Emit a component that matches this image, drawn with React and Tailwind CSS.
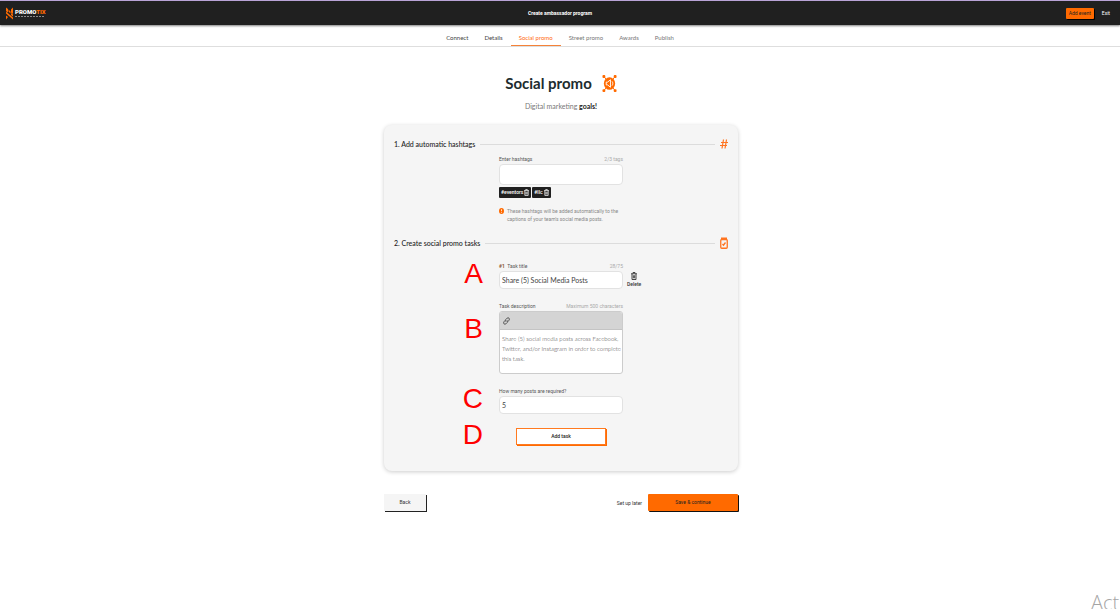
import { useState } from 'react'

const tabs = [
  { label: 'Connect', state: 'done' },
  { label: 'Details', state: 'done' },
  { label: 'Social promo', state: 'active' },
  { label: 'Street promo', state: 'todo' },
  { label: 'Awards', state: 'todo' },
  { label: 'Publish', state: 'todo' },
]

const tabStyles = {
  done: 'text-[#444444] border-transparent',
  active: 'text-[#ff6a13] border-[#f58238]',
  todo: 'text-[#777777] border-transparent',
}

function Logo() {
  return (
    <a href="#home" className="flex items-center gap-0.5" aria-label="Promotix">
      <svg viewBox="0 0 14 26" className="w-[7px] h-[13px]" fill="#ff6a00">
        <path d="M0 1l4 3v7l-4-3zM0 9l14 12v4L0 13zM0 17l4 3-4 5zM14 1l-4 4v6l4 3zM5 5l4 4v4L5 9zM14 15l-4-3v4l4 3z" />
      </svg>
      <span className="flex flex-col gap-px">
        <span className="text-[6px] leading-[6px] font-black text-white font-[Roboto,sans-serif]">
          PROMO<span className="text-[#ff6a00]">TIX</span>
        </span>
        <svg viewBox="0 0 30 1" className="w-[30px] h-px">
          <path d="M0 .5h30" stroke="#8a8a8a" strokeDasharray="2 1" />
        </svg>
      </span>
    </a>
  )
}

function MegaphoneIcon() {
  return (
    <svg viewBox="0 0 32 38" className="w-[15px] h-[19px]" fill="#ff6a00">
      <path d="M4 4l24 30M28 4L4 34" stroke="#ff6a00" strokeWidth="2" />
      <rect x="1" y="1" width="6" height="6" rx="2" />
      <rect x="25" y="1" width="6" height="6" rx="2" />
      <rect x="1" y="31" width="6" height="6" rx="2" />
      <rect x="25" y="31" width="6" height="6" rx="2" />
      <ellipse cx="16" cy="19" rx="12" ry="13.5" />
      <path d="M9 16h3l6-5v16l-6-5H9z" fill="none" stroke="#fff" strokeWidth="2" />
      <path d="M21.5 14.5c2 2.500 2 6.500 0 9" fill="none" stroke="#fff" strokeWidth="2" />
    </svg>
  )
}

function HashIcon() {
  return (
    <svg viewBox="0 0 16 20" className="w-2 h-2.5" fill="none" stroke="#ff7420" strokeWidth="2.4">
      <path d="M7 1L4 19M13 1l-3 18M2 7h14M0 13h14" />
    </svg>
  )
}

function ClipboardIcon() {
  return (
    <svg viewBox="0 0 16 24" className="w-2 h-3" fill="none" stroke="#ff7420" strokeWidth="2.6">
      <rect x="1.500" y="5" width="13" height="17.500" rx="2" />
      <path d="M2 3h12" strokeWidth="4" />
      <path d="M5 14l2 2.500L11 11" />
    </svg>
  )
}

function TrashIcon({ className }) {
  return (
    <svg viewBox="0 0 12 16" className={className} fill="none" stroke="currentColor" strokeWidth="1.800">
      <path d="M0 3.500h12M4 3V1h4v2M2 4v11h8V4M4.700 6.500v6M7.300 6.500v6" />
    </svg>
  )
}

function LinkIcon() {
  return (
    <svg viewBox="0 0 24 28" className="w-[7px] h-2" fill="none" stroke="#444444" strokeWidth="3" strokeLinecap="round">
      <path d="M10 16c-3-3-2-6 0-8l4-4c5-4 11 2 7 7l-3 4" />
      <path d="M14 12c3 3 2 6 0 8l-4 4c-5 4-11-2-7-7l3-4" />
    </svg>
  )
}

function SectionHeader({ title, children }) {
  return (
    <div className="flex items-center gap-[5px] h-3">
      <h2 className="text-[7px] leading-3 font-medium text-[#222222]">{title}</h2>
      <div className="flex-1 h-px bg-[#dcdcdc]" />
      {children}
    </div>
  )
}

function Row({ mark, markClass = 'pt-[3px]', children, side }) {
  return (
    <div className="grid grid-cols-[1fr_124px_1fr]">
      <div className={`flex justify-end items-start pr-4 font-['Liberation_Sans',sans-serif] text-[28px] leading-5 text-[#ff0000] ${markClass}`}>
        {mark}
      </div>
      <div>{children}</div>
      <div className="flex items-end pl-1">{side}</div>
    </div>
  )
}

function Label({ htmlFor, hint, children }) {
  return (
    <div className="flex justify-between text-[5px] leading-[10px] font-[Roboto,sans-serif]">
      <label htmlFor={htmlFor} className="text-[#555555]">{children}</label>
      {hint && <span className="text-[#aaaaaa]">{hint}</span>}
    </div>
  )
}

const inputClass = 'block w-full rounded-[4px] border border-[#e2e2e2] bg-white px-0.5 text-[7px] text-[#444444] outline-none'

export default function App() {
  const [hashtag, setHashtag] = useState('')
  const [tags, setTags] = useState(['#eventors', '#llc'])
  const [title, setTitle] = useState('Share (5) Social Media Posts')
  const [description, setDescription] = useState(
    'Share (5) social media posts across Facebook, Twitter, and/or Instagram in order to complete this task.'
  )
  const [posts, setPosts] = useState('5')

  return (
    <div className="relative min-h-screen overflow-hidden bg-white font-[Lato,sans-serif] text-[#222222]">
      <header className="grid grid-cols-3 items-center h-[25px] px-1.5 border-t border-[#b9a3d6] bg-[#202020] shadow-[0_1px_2px_rgba(0,0,0,0.5)]">
        <Logo />
        <h1 className="text-center text-[5px] leading-[10px] font-bold text-white font-[Roboto,sans-serif]">Create ambassador program</h1>
        <div className="flex items-center justify-end gap-2 pr-1 font-[Roboto,sans-serif]">
          <button className="h-[11px] w-7 rounded-[1px] bg-[#ff6a00] text-[5px] leading-[10px] text-[#222222] shadow-[1px_1px_0_#000000]">
            Add event
          </button>
          <a href="#exit" className="text-[5px] leading-[10px] text-white">Exit</a>
        </div>
      </header>

      <nav className="flex justify-center h-[22px] border-b border-[#dedede]">
        {tabs.map((tab) => (
          <a
            key={tab.label}
            href="#tab"
            className={`px-2 pt-2 border-b text-[6px] leading-[10px] ${tabStyles[tab.state]}`}
          >
            {tab.label}
          </a>
        ))}
      </nav>

      <main className="mx-auto max-w-[356px] pl-0.5 pt-6">
        <div className="flex items-center justify-center gap-2.5">
          <h2 className="text-[15px] leading-6 font-bold text-[#202c2e]">Social promo</h2>
          <MegaphoneIcon />
        </div>
        <p className="pt-[5px] text-center text-[7px] leading-[12px] text-[#777777]">
          Digital marketing <b className="text-[#222222]">goals!</b>
        </p>

        <section className="mt-[13px] rounded-[8px] bg-[#f5f5f5] px-2.5 pt-[13px] pb-[26px] shadow-[0_1px_4px_rgba(0,0,0,0.2)]">
          <SectionHeader title="1. Add automatic hashtags">
            <HashIcon />
          </SectionHeader>
          <div className="pt-1">
            <Row>
              <Label htmlFor="hashtags" hint="2/3 tags">Enter hashtags</Label>
              <input
                id="hashtags"
                className={`${inputClass} h-[21px]`}
                value={hashtag}
                onChange={(e) => setHashtag(e.target.value)}
              />
              <div className="flex gap-px pt-0.5 font-[Roboto,sans-serif]">
                {tags.map((tag) => (
                  <button
                    key={tag}
                    onClick={() => setTags(tags.filter((t) => t !== tag))}
                    className="flex items-center gap-px h-[11px] rounded-[1px] bg-[#202020] px-0.5 text-[5px] font-medium text-white"
                  >
                    {tag}
                    <TrashIcon className="w-[5px] h-[7px]" />
                  </button>
                ))}
              </div>
              <div className="flex gap-[3px] pt-[9px]">
                <svg viewBox="0 0 10 12" className="w-[5px] h-1.5 mt-px shrink-0">
                  <ellipse cx="5" cy="6" rx="5" ry="6" fill="#ff6a00" />
                  <path d="M5 2.500v4M5 8v1.500" stroke="#fff" strokeWidth="1.500" />
                </svg>
                <p className="text-[5px] leading-[8px] text-[#888888] font-[Roboto,sans-serif]">
                  These hashtags will be added automatically to the captions of your team's social media posts.
                </p>
              </div>
            </Row>
          </div>

          <div className="pt-[14px]">
            <SectionHeader title="2. Create social promo tasks">
              <ClipboardIcon />
            </SectionHeader>
          </div>
          <div className="flex flex-col gap-3 pt-3">
            <Row
              mark="A"
              side={
                <button className="flex flex-col items-center gap-px pb-px text-[5px] leading-[7px] font-medium text-[#333333] font-[Roboto,sans-serif]">
                  <TrashIcon className="w-1.5 h-2" />
                  Delete
                </button>
              }
            >
              <Label htmlFor="title" hint="28/75">
                <span className="font-bold text-[#8a5a35]">#1</span>&nbsp; Task title
              </Label>
              <input
                id="title"
                className={`${inputClass} h-[18px]`}
                value={title}
                onChange={(e) => setTitle(e.target.value)}
              />
            </Row>
            <Row mark="B" markClass="pt-[18px]">
              <Label htmlFor="description" hint="Maximum 500 characters">Task description</Label>
              <div className="rounded-[3px] border border-[#cccccc] bg-white overflow-hidden">
                <div className="flex items-center h-[18px] px-[3px] bg-[#d4d4d4] border-b border-[#c4c4c4]">
                  <button aria-label="Insert link">
                    <LinkIcon />
                  </button>
                </div>
                <textarea
                  id="description"
                  className="block w-full h-[43px] resize-none overflow-hidden pl-0.5 pr-0 pt-1 text-[6px] leading-[10px] font-light text-[#444444] outline-none"
                  value={description}
                  onChange={(e) => setDescription(e.target.value)}
                />
              </div>
            </Row>
            <Row mark="C">
              <Label htmlFor="posts">How many posts are required?</Label>
              <input
                id="posts"
                className={`${inputClass} h-[18px]`}
                value={posts}
                onChange={(e) => setPosts(e.target.value)}
              />
            </Row>
          </div>
          <div className="pt-2.5">
            <Row mark="D" markClass="pt-px">
              <div className="flex justify-center pt-1">
                <button className="h-[17px] w-[90px] border border-[#ff7a1f] bg-white text-[5px] font-medium text-[#222222] shadow-[1px_1px_0_#ff6a00] font-[Roboto,sans-serif]">
                  Add task
                </button>
              </div>
            </Row>
          </div>
        </section>

        <div className="flex items-center justify-between pt-[23px] font-[Roboto,sans-serif]">
          <button className="h-[17px] w-[42px] bg-[#f5f5f5] text-[5px] text-[#333333] shadow-[1px_1px_0_#222222]">
            Back
          </button>
          <div className="flex items-center gap-1.5">
            <a href="#later" className="text-[5px] leading-[10px] text-[#333333]">Set up later</a>
            <button className="h-[17px] w-[90px] rounded-[1px] bg-[#ff6a00] text-[5px] text-[#222222] shadow-[1px_1px_0_#111111]">
              Save &amp; continue
            </button>
          </div>
        </div>
      </main>

      <div className="absolute left-[1091px] top-[589px] whitespace-nowrap font-['Open_Sans',sans-serif] text-[20px] leading-7 font-light text-[#a5a5a5]">
        Activate Windows
      </div>
    </div>
  )
}
